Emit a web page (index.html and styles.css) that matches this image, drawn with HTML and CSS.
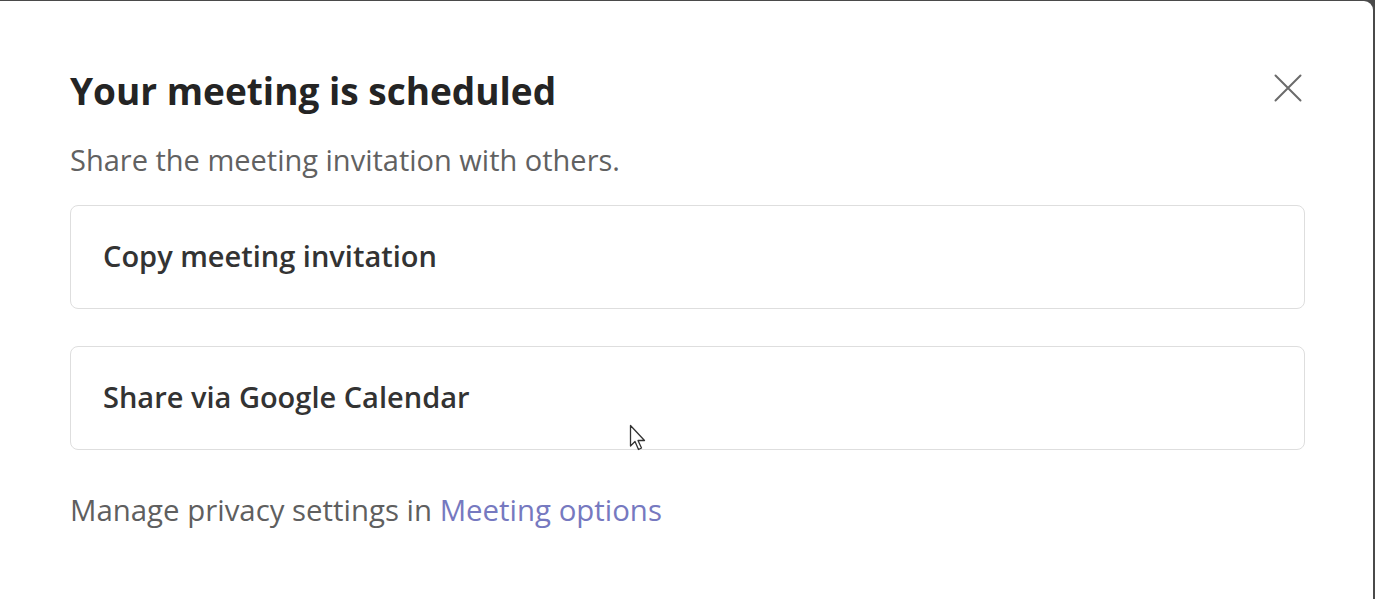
FILE: index.html
```html
<!DOCTYPE html>
<html>
<head>
<meta charset="utf-8">
<link rel="stylesheet" href="styles.css">
</head>
<body>
<div class="dialog">
  <div class="header">
    <h1 class="title">Your meeting is scheduled</h1>
    <button class="close" aria-label="Close">
      <svg width="28" height="28" viewBox="0 0 28 28"><path d="M1.5 1.5 L26.5 26.5 M26.5 1.5 L1.5 26.5" stroke="#6b6b6b" stroke-width="2" fill="none" stroke-linecap="round"/></svg>
    </button>
  </div>
  <p class="subtitle">Share the meeting invitation with others.</p>
  <div class="options">
    <button class="option">Copy meeting invitation</button>
    <button class="option">Share via Google Calendar</button>
  </div>
  <p class="footer">Manage privacy settings in <a class="link" href="#">Meeting options</a></p>
  <svg class="cursor" width="20" height="30" viewBox="0 0 20 30"><path d="M1.5 1.5 L1.5 22 L6 17.5 L9.5 25.5 L12.5 24 L9 16.5 L15.5 16.5 Z" fill="#fff" stroke="#333" stroke-width="1.3" stroke-linejoin="round"/></svg>
</div>
</body>
</html>
```

FILE: styles.css
```css
html, body {
  margin: 0;
  padding: 0;
  height: 100%;
  background: #4a4a4a;
  overflow: hidden;
}
.dialog {
  position: relative;
  box-sizing: border-box;
  width: 1373px;
  height: 620px;
  margin-top: 1px;
  background: #fff;
  border-top-right-radius: 9px;
  padding: 58px 68px 0 70px;
  font-family: "Open Sans", "Noto Sans", sans-serif;
}
.header {
  display: flex;
  align-items: center;
  justify-content: space-between;
}
.title {
  margin: 0;
  font-size: 37px;
  font-weight: 700;
  color: #242424;
  line-height: 64px;
}
.close {
  border: 0;
  background: none;
  padding: 0;
  margin: -6px 3px 0 0;
  width: 28px;
  height: 28px;
  display: flex;
}
.subtitle {
  margin: 17px 0 0;
  font-size: 29px;
  color: #616161;
  line-height: 40px;
}
.options {
  display: flex;
  flex-direction: column;
  gap: 37px;
  margin-top: 25px;
}
.option {
  box-sizing: border-box;
  height: 104px;
  width: 100%;
  text-align: left;
  padding: 0 32px 4px;
  background: #fff;
  border: 1.5px solid #dedede;
  border-radius: 8px;
  font-family: inherit;
  font-size: 29px;
  font-weight: 560;
  color: #333;
}
.footer {
  margin: 40px 0 0;
  font-size: 29.4px;
  color: #5f5f5f;
  line-height: 40px;
}
.link {
  color: #7679c0;
  text-decoration: none;
}
.cursor {
  position: absolute;
  left: 629px;
  top: 423px;
}
```
